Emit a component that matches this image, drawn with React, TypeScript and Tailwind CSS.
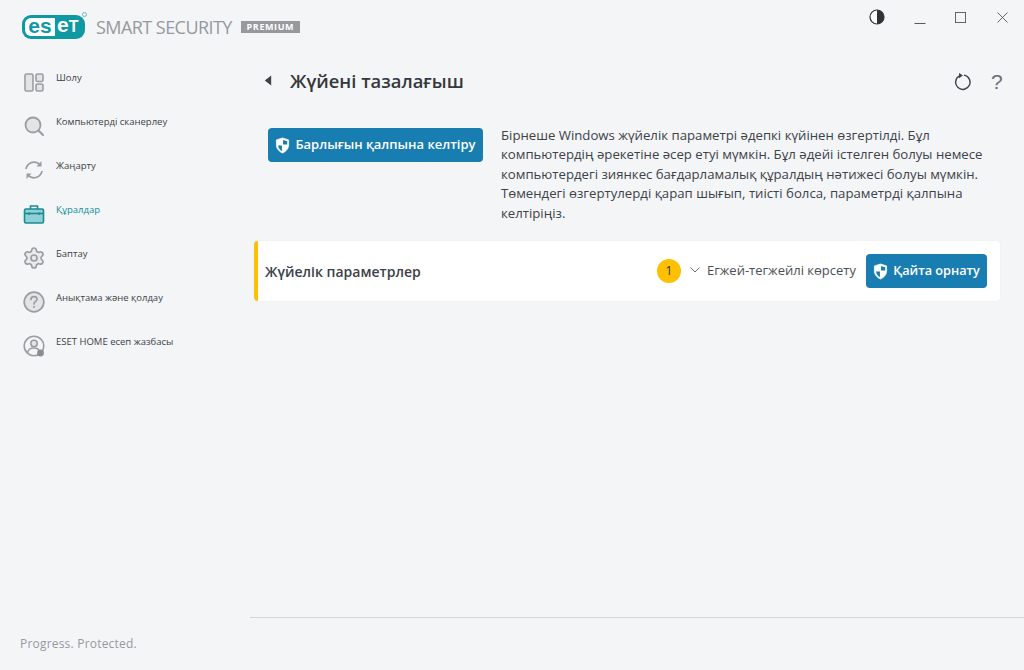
import type { ReactNode } from "react"
import { Settings } from "lucide-react"

const font = "font-['Open_Sans','Noto_Sans',sans-serif]"

function Shield() {
  return (
    <svg viewBox="0 0 16 18" className="w-[15px] h-[17px] shrink-0">
      <path d="M8 1 L14.5 3 V8.5 C14.5 12.5 11.5 15.5 8 17 C4.5 15.5 1.5 12.5 1.5 8.5 V3 Z" fill="#fff" stroke="#fff" strokeWidth="0.8" />
      <path d="M8.6 3.2 L13 4.5 V8 H8.6 Z M7.4 9 V15 C5.5 14 3.6 11.8 3.2 9 Z" fill="#187db0" />
    </svg>
  )
}

function NavIcon({ name }: { name: string }) {
  const g = "#9b9ea1"
  if (name === "overview")
    return (
      <svg viewBox="0 0 22 22" className="w-[22px] h-[22px]" fill="#e3e4e5" stroke={g} strokeWidth="1.6">
        <rect x="2" y="3" width="8" height="17" rx="1.5" />
        <rect x="13" y="3" width="7" height="7.5" rx="1.5" />
        <rect x="13" y="13" width="7" height="7" rx="1.5" />
      </svg>
    )
  if (name === "scan")
    return (
      <svg viewBox="0 0 22 22" className="w-[22px] h-[22px]" fill="#e3e4e5" stroke={g} strokeWidth="1.8">
        <circle cx="10" cy="10" r="7.5" />
        <path d="M15.5 15.5 L20 20" strokeLinecap="round" fill="none" strokeWidth="2.2" />
      </svg>
    )
  if (name === "update")
    return (
      <svg viewBox="0 0 22 22" className="w-[22px] h-[22px]" fill="none" stroke={g} strokeWidth="1.8">
        <path d="M3 10 C3.5 6 7 3.2 11 3.2 C13.5 3.2 15.5 4.2 17 6" />
        <path d="M19 12 C18.5 16 15 18.8 11 18.8 C8.5 18.8 6.5 17.8 5 16" />
        <path d="M18.5 2 V7.5 H13.5 Z" fill={g} stroke="none" />
        <path d="M3.5 20 V14.5 H8.5 Z" fill={g} stroke="none" />
      </svg>
    )
  if (name === "tools")
    return (
      <svg viewBox="0 0 22 22" className="w-[22px] h-[22px]" stroke="#1d8a93" strokeWidth="1.6">
        <path d="M7.5 6 V3 H14.5 V6" fill="none" />
        <rect x="1.5" y="6" width="19" height="14" rx="1.5" fill="#8fd0d6" />
        <path d="M1.5 10.5 H20.5" fill="none" />
        <path d="M6 9.5 V12 M16 9.5 V12" fill="none" />
      </svg>
    )
  if (name === "setup") return <Settings className="w-[24px] h-[24px] -ml-[1px] -mt-[1px]" color={g} fill="#e9eaeb" strokeWidth={1.7} />
  if (name === "help")
    return (
      <svg viewBox="0 0 22 22" className="w-[22px] h-[22px]" fill="#e3e4e5" stroke={g} strokeWidth="1.7">
        <circle cx="11" cy="11" r="9.8" />
        <path d="M8 8.5 C8 6.5 9.5 5.6 11 5.6 C12.8 5.6 14 6.8 14 8.2 C14 10.4 11 10.4 11 13" fill="none" strokeLinecap="round" />
        <circle cx="11" cy="16" r="0.7" fill={g} strokeWidth="0.8" />
      </svg>
    )
  return (
    <svg viewBox="0 0 22 22" className="w-[22px] h-[22px]" fill="none" stroke={g} strokeWidth="1.6">
      <circle cx="11" cy="11" r="9.8" fill="#f4f5f7" />
      <circle cx="11" cy="8.5" r="3.2" fill="#e3e4e5" />
      <path d="M4.5 18 C5 14.5 7.5 13 11 13 C13 13 15 13.6 16 15" />
      <circle cx="17.5" cy="18" r="3.4" fill="#8a8d90" stroke="none" />
    </svg>
  )
}

const items = [
  { icon: "overview", label: "Шолу" },
  { icon: "scan", label: "Компьютерді сканерлеу" },
  { icon: "update", label: "Жаңарту" },
  { icon: "tools", label: "Құралдар", active: true },
  { icon: "setup", label: "Баптау" },
  { icon: "help", label: "Анықтама және қолдау" },
  { icon: "account", label: "ESET HOME есеп жазбасы" },
]

function BlueButton({ children, className }: { children: ReactNode; className: string }) {
  return (
    <button className={`flex items-center justify-center gap-[5px] rounded-[4px] bg-[#187db0] text-white font-semibold whitespace-nowrap ${className}`}>
      <Shield />
      {children}
    </button>
  )
}

export default function App() {
  return (
    <div className={`${font} w-[1024px] h-[670px] overflow-hidden bg-[#f4f5f7] flex text-[#3c4248]`}>
      {/* Sidebar */}
      <aside className="w-[250px] shrink-0 flex flex-col">
        <div className="h-[60px] pl-[22px] pt-[14px] flex items-start whitespace-nowrap">
          <div className="relative mt-[1px] w-[63px] h-[24px] shrink-0 rounded-[9px] bg-[#0f99a3] flex items-center font-['Liberation_Sans',sans-serif] font-bold">
            <div className="ml-[3px] w-[30px] h-[18px] rounded-l-[6px] bg-white flex items-center justify-center">
              <span className="text-[#0f99a3] text-[21px] leading-[18px] -mt-[3px]">es</span>
            </div>
            <div className="ml-[2px] flex items-baseline text-white leading-[18px] -mt-[3px]">
              <span className="text-[21px]">e</span>
              <span className="text-[16px]">T</span>
            </div>
            <span className="absolute -top-[3px] -right-[2px] w-[5px] h-[5px] rounded-full border border-[#5fbcc3]" />
          </div>
          <div className="ml-[11px] mt-[2px] shrink-0 text-[18px] leading-[22px] tracking-[-0.55px] text-[#97999c]">SMART SECURITY</div>
          <div className="ml-[9px] mt-[7px] h-[12px] w-[59px] shrink-0 text-center bg-[#97999c] text-white text-[9px] leading-[12px] font-bold tracking-[0.6px]">PREMIUM</div>
        </div>
        <nav className="flex flex-col">
          {items.map((it) => (
            <div key={it.label} className="h-[44px] pl-[23px] flex items-start">
              <div className="w-[33px] pt-[11px] shrink-0">
                <NavIcon name={it.icon} />
              </div>
              <div className={`pt-[11px] text-[9.5px] leading-[14px] ${it.active ? "text-[#0f8f99]" : "text-[#3c4248]"}`}>{it.label}</div>
            </div>
          ))}
        </nav>
        <div className="mt-auto pl-[20px] pb-[18px] text-[12px] leading-[16px] tracking-[0.2px] text-[#96999d]">Progress. Protected.</div>
      </aside>

      {/* Main */}
      <main className="flex-1 flex flex-col min-w-0">
        <div className="h-[60px] flex justify-end items-start pt-[9px] pr-[16px]">
          <svg viewBox="0 0 16 16" className="w-[16px] h-[16px] mr-[29px]">
            <circle cx="8" cy="8" r="7" fill="#fff" stroke="#2f3337" strokeWidth="1.2" />
            <path d="M8 1 A7 7 0 0 1 8 15 Z" fill="#2f3337" />
          </svg>
          <svg viewBox="0 0 12 12" className="w-[12px] h-[12px] mr-[29px] mt-[4px]" stroke="#55585c" fill="none">
            <path d="M0.5 10.5 H11.5" />
          </svg>
          <svg viewBox="0 0 12 12" className="w-[11px] h-[11px] mr-[31px] mt-[3px]" stroke="#55585c" fill="none">
            <rect x="0.5" y="0.5" width="11" height="11" />
          </svg>
          <svg viewBox="0 0 12 12" className="w-[11px] h-[11px] mt-[3px]" stroke="#55585c" fill="none">
            <path d="M0.5 0.5 L11.5 11.5 M11.5 0.5 L0.5 11.5" />
          </svg>
        </div>

        <div className="h-[44px] flex items-center pl-[14px] pr-[21px]">
          <svg viewBox="0 0 8 12" className="w-[8px] h-[11px] mb-[3px]">
            <path d="M7.5 0.5 V11.5 L0.5 6 Z" fill="#3c4248" />
          </svg>
          <h1 className="ml-[18px] text-[18.4px] leading-[26px] font-semibold text-[#34383d] mb-[2px]">Жүйені тазалағыш</h1>
          <div className="ml-auto flex items-center gap-[20px] mr-[1px] -mt-[1px]">
            <svg viewBox="0 0 18 18" className="w-[18px] h-[19px]" fill="none" stroke="#3c4248" strokeWidth="1.4">
              <path d="M6 3.6 A7.2 7.2 0 1 0 11 2.6" />
              <path d="M6 0.5 L10 3 L6 5.8 Z" fill="#3c4248" stroke="none" />
            </svg>
            <span className="text-[21px] leading-[22px] text-[#6b6f73] font-['Liberation_Sans',sans-serif] w-[11px] text-center">?</span>
          </div>
        </div>

        <div className="flex pl-[18px] pt-[24px] h-[137px] items-start">
          <BlueButton className="w-[215px] h-[34px] shrink-0 text-[13px]">Барлығын қалпына келтіру</BlueButton>
          <p className="ml-[18px] w-[484px] -mt-[2px] text-[13.2px] leading-[19.4px] text-[#3c4248]">
            Бірнеше Windows жүйелік параметрі әдепкі күйінен өзгертілді. Бұл компьютердің әрекетіне әсер етуі мүмкін. Бұл әдейі істелген болуы немесе компьютердегі зиянкес бағдарламалық құралдың нәтижесі болуы мүмкін. Төмендегі өзгертулерді қарап шығып, тиісті болса, параметрді қалпына келтіріңіз.
          </p>
        </div>

        <div className="ml-[4px] mr-[24px] h-[60px] bg-white rounded-[4px] border-l-[4px] border-[#ffc000] shadow-[0_0_2px_rgba(0,0,0,0.05)] flex items-center pl-[7px] pr-[13px]">
          <span className="text-[14px] font-semibold text-[#3c4248]">Жүйелік параметрлер</span>
          <span className="ml-auto w-[24px] h-[24px] rounded-full bg-[#ffc000] flex items-center justify-center text-[12px] text-[#2f3337]">1</span>
          <svg viewBox="0 0 10 6" className="w-[10px] h-[6px] ml-[9px] mb-[3px]" fill="none" stroke="#6b6f73">
            <path d="M0.5 0.5 L5 5 L9.5 0.5" />
          </svg>
          <span className="ml-[7px] text-[13px] text-[#4b5055]">Егжей-тегжейлі көрсету</span>
          <BlueButton className="ml-[10px] w-[121px] h-[34px] text-[12.7px]">Қайта орнату</BlueButton>
        </div>

        <div className="mt-auto mb-[52px] h-px bg-[#d4d6d9]" />
      </main>
    </div>
  )
}
